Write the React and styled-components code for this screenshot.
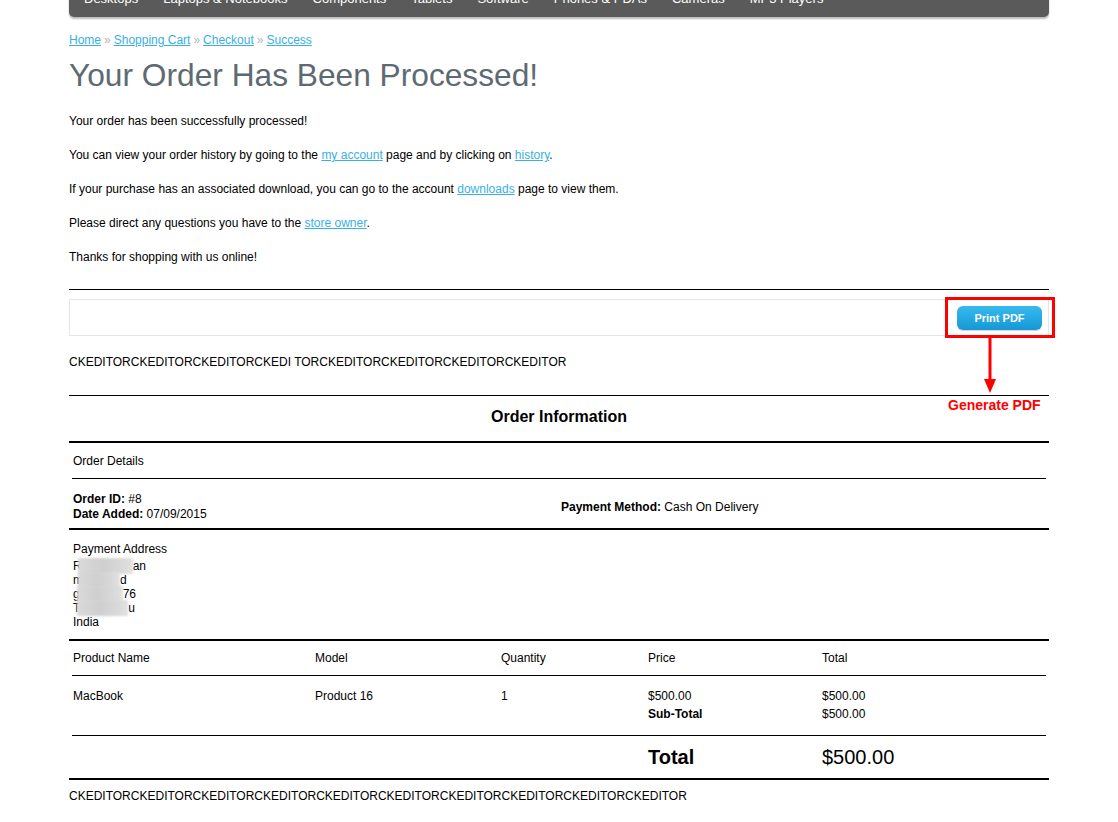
import React from "react";
import styled, { createGlobalStyle } from "styled-components";

const Global = createGlobalStyle`
  html, body { margin: 0; padding: 0; background: #fff; }
  body {
    font-family: "Liberation Sans", Arial, Helvetica, sans-serif;
    color: #000;
    overflow: hidden;
  }
`;

const Page = styled.div`
  width: 980px;
  margin: 0 auto;
`;

const Nav = styled.nav`
  margin-top: -20px;
  height: 37px;
  background: #5a5a5a;
  border-radius: 0 0 5px 5px;
  box-shadow: 0 2px 2px rgba(0, 0, 0, 0.28);
  display: flex;
  align-items: center;
  gap: 25px;
  padding-left: 15px;
`;

const NavItem = styled.span`
  color: #fff;
  font-size: 13px;
  line-height: 37px;
  white-space: nowrap;
`;

const Breadcrumb = styled.div`
  margin-top: 15px;
  font-size: 12px;
  line-height: 16px;
`;

const Crumb = styled.a`
  color: #38b0e3;
  text-decoration: underline;
`;

const Sep = styled.span`
  color: #b5b5b5;
  padding: 0 3px;
`;

const Title = styled.h1`
  margin: 8px 0 0;
  font-size: 31.7px;
  line-height: 38px;
  font-weight: normal;
  color: #5e6a72;
`;

const Para = styled.p`
  margin: 18px 0 0;
  font-size: 12px;
  line-height: 16px;
  color: #000;
  &:first-of-type {
    margin-top: 19px;
  }
`;

const Link = styled.a`
  color: #38b0e3;
  text-decoration: underline;
`;

const Rule = styled.hr`
  margin: 24px 0 0;
  border: 0;
  border-top: 1px solid #000;
  height: 0;
`;

const PrintBar = styled.div`
  position: relative;
  margin-top: 9px;
  height: 37px;
  box-sizing: border-box;
  border: 1px solid #e6e6e6;
  display: flex;
  align-items: center;
  justify-content: flex-end;
  padding-right: 6px;
`;

const PrintButton = styled.button`
  width: 85px;
  height: 24px;
  border: 0;
  border-radius: 6px;
  background: linear-gradient(#38b9ee, #1598d6);
  box-shadow: 0 1px 1px rgba(0, 0, 0, 0.18);
  color: #fff;
  font-family: "Liberation Sans", Arial, sans-serif;
  font-weight: bold;
  font-size: 11px;
  cursor: pointer;
`;

const RedFrame = styled.div`
  position: absolute;
  left: 875px;
  top: -3px;
  width: 110px;
  height: 41px;
  box-sizing: border-box;
  border: 3px solid #ff0000;
`;

const Arrow = styled.svg`
  position: absolute;
  left: 914px;
  top: 38px;
`;

const ArrowLabel = styled.div`
  position: absolute;
  left: 878px;
  top: 97px;
  color: #ff0000;
  font-weight: bold;
  font-size: 14px;
  line-height: 16px;
  white-space: nowrap;
`;

const Editor = styled.div`
  margin-top: ${(p) => p.$mt}px;
  font-size: 12px;
  line-height: 16px;
  white-space: nowrap;
`;

const OrderTable = styled.div`
  margin-top: 25px;
  border-top: 1px solid #000;
`;

const OrderTitle = styled.div`
  text-align: center;
  font-weight: bold;
  font-size: 16px;
  line-height: 20px;
  padding: 11px 0 14px;
  border-bottom: 2px solid #000;
`;

const Block = styled.div`
  padding: 0 3px;
  border-bottom: ${(p) => (p.$open ? "0" : "2px solid #000")};
  font-size: 12px;
`;

const Row = styled.div`
  padding: ${(p) => p.$pad};
  border-bottom: ${(p) => (p.$line ? "1px solid #000" : "0")};
`;

const Cell = styled.div`
  padding-left: 1px;
  line-height: ${(p) => p.$lh || 16}px;
`;

const DetailGrid = styled.div`
  display: grid;
  grid-template-columns: 488px 1fr;
  align-items: center;
`;

const Label = styled.b`
  font-weight: bold;
`;

const AddressBox = styled.div`
  padding-left: 1px;
`;

const AddressLabel = styled.div`
  line-height: 16px;
  margin-bottom: 2px;
`;

const AddressLine = styled.div`
  line-height: 14px;
  height: 14px;
  white-space: nowrap;
`;

const Blur = styled.span`
  display: inline-block;
  vertical-align: top;
  width: ${(p) => p.$w}px;
  height: 16px;
  margin: -1px 0 -1px ${(p) => p.$shift || -3}px;
  background: linear-gradient(90deg, #dadada, #cfcfcf 45%, #d9d9d9 80%, #e2e2e2);
  filter: blur(1px);
`;

const ProductGrid = styled.div`
  display: grid;
  grid-template-columns: 242px 186px 147px 174px 1fr;
  line-height: ${(p) => p.$lh}px;
  font-size: ${(p) => p.$fs || 12}px;
`;

const PCell = styled.div`
  padding-left: 1px;
  font-weight: ${(p) => (p.$bold ? "bold" : "normal")};
`;

const TotalRow = styled.div`
  padding: 9px 3px;
  border-bottom: 2px solid #000;
`;

const navItems = [
  "Desktops",
  "Laptops & Notebooks",
  "Components",
  "Tablets",
  "Software",
  "Phones & PDAs",
  "Cameras",
  "MP3 Players",
];

const address = [
  { a: "R", w: 55, b: "an", shift: -4 },
  { a: "m", w: 42, b: "d", shift: -5 },
  { a: "g", w: 46, b: "76", shift: -3 },
  { a: "T", w: 51, b: "u", shift: -3 },
];

export default function App() {
  return (
    <>
      <Global />
      <Page>
        <Nav>
          {navItems.map((n) => (
            <NavItem key={n}>{n}</NavItem>
          ))}
        </Nav>

        <Breadcrumb>
          <Crumb>Home</Crumb>
          <Sep>»</Sep>
          <Crumb>Shopping Cart</Crumb>
          <Sep>»</Sep>
          <Crumb>Checkout</Crumb>
          <Sep>»</Sep>
          <Crumb>Success</Crumb>
        </Breadcrumb>

        <Title>Your Order Has Been Processed!</Title>

        <Para>Your order has been successfully processed!</Para>
        <Para>
          You can view your order history by going to the <Link>my account</Link> page and by
          clicking on <Link>history</Link>.
        </Para>
        <Para>
          If your purchase has an associated download, you can go to the account{" "}
          <Link>downloads</Link> page to view them.
        </Para>
        <Para>
          Please direct any questions you have to the <Link>store owner</Link>.
        </Para>
        <Para>Thanks for shopping with us online!</Para>

        <Rule />

        <PrintBar>
          <PrintButton>Print PDF</PrintButton>
          <RedFrame />
          <Arrow width="12" height="56" viewBox="0 0 12 56">
            <line x1="6" y1="0" x2="6" y2="44" stroke="#ff0000" strokeWidth="3" />
            <polygon points="0,41 12,41 6,55" fill="#ff0000" />
          </Arrow>
          <ArrowLabel>Generate PDF</ArrowLabel>
        </PrintBar>

        <Editor $mt={18}>CKEDITORCKEDITORCKEDITORCKEDI TORCKEDITORCKEDITORCKEDITORCKEDITOR</Editor>

        <OrderTable>
          <OrderTitle>Order Information</OrderTitle>

          <Block>
            <Row $pad="10px 0 9px" $line>
              <Cell>Order Details</Cell>
            </Row>
            <Row $pad="13px 0 6px">
              <DetailGrid>
                <Cell $lh={15}>
                  <Label>Order ID:</Label> #8
                  <br />
                  <Label>Date Added:</Label> 07/09/2015
                </Cell>
                <Cell $lh={15}>
                  <Label>Payment Method:</Label> Cash On Delivery
                </Cell>
              </DetailGrid>
            </Row>
          </Block>

          <Block>
            <Row $pad="11px 0 10px">
              <AddressBox>
                <AddressLabel>Payment Address</AddressLabel>
                {address.map((l) => (
                  <AddressLine key={l.a + l.b}>
                    {l.a}
                    <Blur $w={l.w} $shift={l.shift} />
                    {l.b}
                  </AddressLine>
                ))}
                <AddressLine>India</AddressLine>
              </AddressBox>
            </Row>
          </Block>

          <Block $open>
            <Row $pad="9px 0 9px" $line>
              <ProductGrid $lh={16}>
                <PCell>Product Name</PCell>
                <PCell>Model</PCell>
                <PCell>Quantity</PCell>
                <PCell>Price</PCell>
                <PCell>Total</PCell>
              </ProductGrid>
            </Row>
            <Row $pad="11px 0 12px" $line>
              <ProductGrid $lh={18}>
                <PCell>MacBook</PCell>
                <PCell>Product 16</PCell>
                <PCell>1</PCell>
                <PCell>$500.00</PCell>
                <PCell>$500.00</PCell>
                <PCell />
                <PCell />
                <PCell />
                <PCell $bold>Sub-Total</PCell>
                <PCell>$500.00</PCell>
              </ProductGrid>
            </Row>
          </Block>
          <TotalRow>
            <ProductGrid $lh={24} $fs={20}>
              <PCell />
              <PCell />
              <PCell />
              <PCell $bold>Total</PCell>
              <PCell>$500.00</PCell>
            </ProductGrid>
          </TotalRow>
        </OrderTable>

        <Editor $mt={8}>
          CKEDITORCKEDITORCKEDITORCKEDITORCKEDITORCKEDITORCKEDITORCKEDITORCKEDITORCKEDITOR
        </Editor>
      </Page>
    </>
  );
}
